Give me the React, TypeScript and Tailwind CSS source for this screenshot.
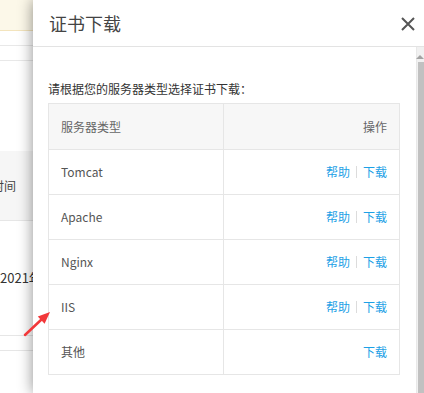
const rows = [
  { name: "Tomcat", help: true },
  { name: "Apache", help: true },
  { name: "Nginx", help: true },
  { name: "IIS", help: true },
  { name: "其他", help: false },
];

function Links({ help }: { help: boolean }) {
  return (
    <div className="flex items-center text-[12px] text-[#1da1e6]">
      {help && (
        <>
          <span>帮助</span>
          <span className="mx-[6px] h-[12px] w-px bg-[#dcdcdc]" />
        </>
      )}
      <span>下载</span>
    </div>
  );
}

export default function App() {
  return (
    <div className="relative h-[393px] w-[424px] overflow-hidden bg-white font-['Noto_Sans_CJK_SC','Noto_Sans',sans-serif]">
      {/* page behind the dialog */}
      <div className="flex flex-col">
        <div className="h-[31px] border-b border-[#f3e4bd] bg-[#fcf8e9]" />
        <div className="h-[15px] border-b border-[#e8e8e8]" />
        <div className="h-[15px] border-b border-[#e8e8e8]" />
        <div className="h-[90px]" />
        <div className="flex h-[70px] items-center border-b border-[#e6e6e6] bg-[#f6f6f6]">
          <span className="-ml-[8px] text-[12px] text-[#444]">时间</span>
        </div>
        <div className="flex h-[114px] items-center">
          <span className="text-[13px] text-[#333]">2021年</span>
        </div>
        <div className="h-[16px] border-t border-b border-[#e6e6e6]" />
      </div>

      {/* dialog */}
      <div className="absolute left-[33px] top-0 flex h-[393px] w-[391px] flex-col bg-white shadow-[0_0_14px_rgba(0,0,0,0.45)]">
        <div className="flex h-[47px] items-center justify-between border-b border-[#e3e3e3] pl-[16px] pr-[8px]">
          <span className="text-[18px] text-[#444]">证书下载</span>
          <svg width="16" height="16" viewBox="0 0 16 16" className="mt-[2px]">
            <path d="M2 2L14 14M14 2L2 14" stroke="#555" strokeWidth="2" />
          </svg>
        </div>
        <div className="flex flex-1">
          <div className="flex-1 pl-[15px]">
            <div className="mt-[32px] h-[20px] text-[12px] leading-[20px] text-[#333]">
              请根据您的服务器类型选择证书下载：
            </div>
            <div className="mt-[4px] w-[352px] border-x border-t border-[#e6e6e6] text-[12px]">
              <div className="flex h-[46px] border-b border-[#e6e6e6] bg-[#f7f7f7] text-[#666]">
                <div className="flex w-[175px] items-center border-r border-[#e6e6e6] pl-[12px]">服务器类型</div>
                <div className="flex flex-1 items-center justify-end pr-[12px]">操作</div>
              </div>
              {rows.map((r) => (
                <div key={r.name} className="flex h-[45px] border-b border-[#e6e6e6] text-[#555]">
                  <div className="flex w-[175px] items-center border-r border-[#e6e6e6] pl-[12px]">{r.name}</div>
                  <div className="flex flex-1 items-center justify-end pr-[12px]">
                    <Links help={r.help} />
                  </div>
                </div>
              ))}
            </div>
          </div>
          {/* scrollbar */}
          <div className="flex w-[8px] flex-col border-l border-[#e8e8e8] bg-[#f1f1f1]">
            <div className="flex h-[15px] items-end justify-end pb-[3px]">
              <div className="h-0 w-0 border-x-[4px] border-b-[4px] border-x-transparent border-b-[#a3a3a3]" />
            </div>
            <div className="ml-px flex-1 bg-[#c1c1c1]" />
          </div>
        </div>
      </div>

      {/* red annotation arrow */}
      <svg className="absolute left-[20px] top-[305px]" width="35" height="35" viewBox="0 0 35 35">
        <path d="M5 30L22 14" stroke="#f2383a" strokeWidth="2.5" strokeLinecap="round" />
        <path d="M30 7L24.6 18.8L17.8 11.4Z" fill="#f2383a" />
      </svg>
    </div>
  );
}
